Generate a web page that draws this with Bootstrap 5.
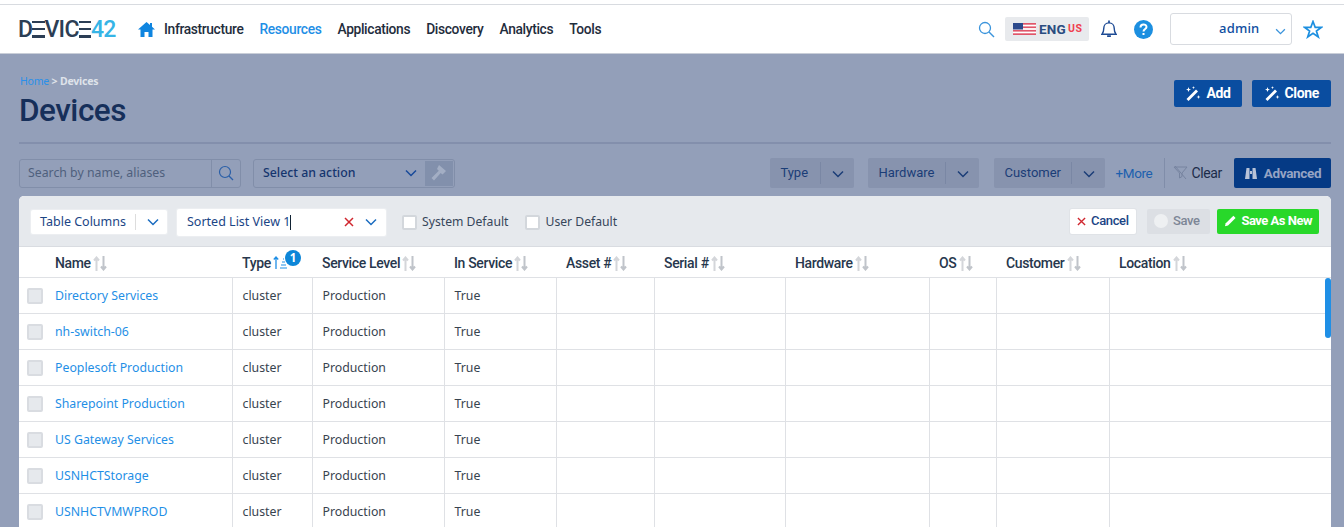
<!DOCTYPE html>
<html lang="en"><head><meta charset="utf-8"><title>Devices</title>
<link href="https://cdn.jsdelivr.net/npm/bootstrap@5.3.0/dist/css/bootstrap.min.css" rel="stylesheet">
<style>
html,body{height:527px;overflow:hidden}
body{background:#939fb9;font-family:"Noto Sans",sans-serif;font-size:12.3px;color:#1f2d3d}
.cond{font-family:Roboto,sans-serif;font-weight:500;letter-spacing:-.35px}
.strip{height:4px;background:#fff}
.topbar{height:50px;background:#fff;border-top:1px solid #d8dbe0;border-bottom:1px solid #c9ced8;padding:0 21px 0 18px}
.logo{font-family:Roboto,sans-serif;font-size:23px;font-weight:500;letter-spacing:-.75px;color:#2c3e55;width:99px;line-height:1;white-space:nowrap;flex:none}
.logo b{font-weight:500;color:#36b4e6}
.logo i{font-style:normal;color:transparent;background:linear-gradient(#2c3e55 0 2.5px,transparent 2.5px 7px,#2c3e55 7px 9.5px,transparent 9.5px 14.5px,#2c3e55 14.5px 17px);background-size:100% 17px;background-repeat:no-repeat;background-position:0 5px}
.homeic{margin:0 9px 0 21px}
.mainnav{gap:16px;font-size:13.8px}
.mainnav a{color:#1f2d3d;text-decoration:none}
.mainnav a.on{color:#1f8fe6}
.lang{width:84px;height:24px;background:#e8eaed;border-radius:2px;gap:3px;margin:0 12px 0 10px;font-size:13.5px;font-weight:700;color:#2a4d80;letter-spacing:.2px;padding-left:8px}
.lang small{font-size:10.5px;color:#f0404f;margin-left:-1px;letter-spacing:.6px}
.bellq{margin-left:17px}
.adminbox{width:122px;height:32px;border:1px solid #d8dbe0;border-radius:3px;color:#0e4da0;font-size:13px;font-weight:500;padding:0 5px 0 48px;margin:0 11px 0 17px;letter-spacing:.2px}
.page{padding:0 13px 0 19px}
.headrow{height:90px;border-bottom:2px solid #838fac}
.crumb{font-size:10.5px;font-weight:700;margin-top:20px;margin-left:1px;color:#dfe3ea;letter-spacing:-.2px}
.crumb a{color:#2a90ea;text-decoration:none;font-weight:400}
.ttl{font-size:31.500px;font-weight:500;color:#162f5a;line-height:36px;margin:3px 0 0;letter-spacing:-.5px}
.bigbtn{height:27px;background:#0a4da0;border-radius:2px;color:#fff;font-size:14px;font-weight:700;border:0;padding:0 11px;gap:5px;margin-top:26px}
.bigbtn+.bigbtn{margin-left:2px;padding:0 12px}
.filt{height:29px;margin-top:14px;padding-top:1px}
.srch{width:222px;height:29px;border:1px solid #818ea9;border-radius:3px;color:#4f5f7d;padding-left:8px}
.srch .ph{width:183px;white-space:nowrap;padding-top:1px}
.srch .sic{border-left:1px solid #818ea9;height:27px;flex:1}
.actsel{width:202px;height:29px;border:1px solid #818ea9;border-radius:3px;margin-left:12px;color:#15356e;font-weight:500;padding:1px 1px 1px 9px}
.actsel .hm{width:28px;height:25px;background:#8290ac;margin-left:auto}
.fsel{height:30px;background:#8793ae;border-radius:2px;color:#1b3d77;font-size:13px;font-weight:400;letter-spacing:0;margin-right:14px}
.fsel.wide{margin-right:15px}
.fsel.last{margin-right:14px}
.fsel .lb{height:22px;border-right:1px solid #7a87a4;line-height:22px;padding-left:10px}
.fsel .w1{width:51px}.fsel .w2{width:78px}
.fsel .ch{width:33px}
.more{color:#1c5fae;font-size:13.5px;margin:0 12px 0 -4px;font-weight:400}
.vsep{width:1px;height:30px;background:#808da9;margin-right:8px}
.clr{font-size:14px;color:#1c2c4a;font-weight:400;gap:3px;margin-right:12px}
.advbtn{height:30px;width:97px;background:#053a85;border-radius:2px;color:#95a4c4;font-size:13.5px;font-weight:700;gap:6px;justify-content:center}
.cardx{margin-top:9px;background:#fff;border-radius:5px 5px 0 0;overflow:hidden;position:relative;height:340px}
.tools{height:51px;background:#e6e9ed;border-bottom:1px solid #d9dce1;padding:2px 12px 0}
.wsel{background:#fff;border-radius:2px;color:#1b4585;font-size:12.5px;height:24px;width:136px;padding-left:9px;box-shadow:0 0 0 1px #eceef1;white-space:nowrap}
.wsel .sp{width:1px;height:16px;background:#ddd;margin:0 11px 0 auto}
.wsel2{background:#fff;border-radius:2px;color:#1b4585;height:27px;width:209px;margin:0 16px 0 10px;padding:0 9px 0 10px;font-size:12.5px;box-shadow:0 0 0 1px #eceef1;white-space:nowrap}
.wsel2 .xx{margin-right:11px}
.caret{display:inline-block;width:1px;height:15px;background:#123}
.ckb{width:15px;height:15px;background:#fff;border:2px solid #d3d7dc;border-radius:2px;margin-right:5px}
.cklab{margin-right:17px;color:#36465a;font-size:12.2px}
.tb{height:25px;border-radius:2px;font-size:13px;gap:5px;padding:0 7px;font-weight:500;white-space:nowrap;margin-top:-2px}
.tb-c{background:#fff;color:#1b4585;box-shadow:0 0 0 1px #e0e3e7;margin-right:11px;width:66px}
.tb-s{background:#dcdfe4;color:#7c8696;margin-right:7px;width:63px}
.tb-n{background:#28d82a;color:#fff;font-weight:700;width:102px;letter-spacing:-.5px}
.dot{width:14px;height:14px;border-radius:50%;background:#eef0f2;display:inline-block}
.grid{table-layout:fixed;width:1312px;border-collapse:collapse;margin:0}
.grid th{height:30px;border-bottom:1px solid #dfe1e5;font-family:Roboto,sans-serif;font-weight:500;font-size:14px;letter-spacing:-.35px;color:#27374d;padding:3px 0 0 10px;white-space:nowrap;vertical-align:middle}
.grid td{height:36px;border-bottom:1px solid #dfe1e5;border-right:1px solid #dfe1e5;padding:2px 0 0 10px;color:#38434f;font-size:12.3px;vertical-align:middle}
.grid tr>*:first-child{padding-left:36px;position:relative}
.grid td a{color:#1f8fe6;text-decoration:none}
.grid td:last-child{border-right:0}
.rowck{position:absolute;left:8px;top:10px;width:16px;height:16px;background:#e6e9ed;border:2px solid #d9dce1;border-radius:2px}
.sorti{vertical-align:-3px;margin-left:-1px}
.sortup{vertical-align:-1px;margin-left:-1px}
.cnum{position:absolute;left:266px;top:54px;width:16px;height:16px;border-radius:50%;background:#0d86d8;color:#fff;font-size:11.500px;font-weight:700;line-height:16px;text-align:center}
.sbar{position:absolute;right:0;top:82px;width:6px;height:60px;background:#1f8fe6;border-radius:3px}
.c1{width:213px}.c2{width:80px}.c3{width:132px}.c4{width:112px}.c5{width:98px}.c6{width:131px}.c7{width:144px}.c8{width:67px}.c9{width:113px}
</style></head><body>
<svg width="0" height="0" class="position-absolute">
<symbol id="chev" viewBox="0 0 12 8"><path d="M1 1.500 6 6.500 11 1.500" fill="none" stroke="currentColor" stroke-width="1.500"/></symbol>
<symbol id="xic" viewBox="0 0 10 10"><path d="M1 1l8 8M9 1l-8 8" fill="none" stroke="#d0272f" stroke-width="1.500"/></symbol>
<symbol id="sort" viewBox="0 0 14 15"><path d="M3.500 15V2M1 4.500 3.500 1.500 6 4.500" fill="none" stroke="#d4d6da" stroke-width="2"/><path d="M10.500 0V13M8 10.500 10.500 13.500 13 10.500" fill="none" stroke="#c0c4ca" stroke-width="2"/></symbol>
<symbol id="wand" viewBox="0 0 16 16"><path d="M1.500 13 11 3.500l2 2L3.500 15z" fill="#fff"/><path d="M3.500 1 4.200 3 6 3.600 4.200 4.300 3.500 6 2.800 4.300 1 3.600 2.800 3zM13.500 9l.5 1.500 1.500.5-1.500.5-.5 1.500-.5-1.500-1.500-.5 1.500-.5zM8.500 0l.4 1.200 1.200.4-1.200.4-.4 1.200L8.100 2 6.900 1.600 8.100 1.200z" fill="#fff"/></symbol>
</svg>
<div class="strip"></div>
<nav class="topbar d-flex align-items-center">
 <div class="logo">D<i>E</i>VIC<i>E</i><b>42</b></div>
 <svg class="homeic" width="17" height="15" viewBox="0 0 17 15"><path d="M8.500 0 0 7.500h2.500V15h4v-5h4v5h4V7.500H17L14 4.800V1h-2v2.100z" fill="#0f85e0"/></svg>
 <div class="mainnav cond d-flex"><a href="#">Infrastructure</a><a href="#" class="on">Resources</a><a href="#">Applications</a><a href="#">Discovery</a><a href="#">Analytics</a><a href="#">Tools</a></div>
 <svg class="ms-auto" width="17" height="17" viewBox="0 0 17 17"><circle cx="7" cy="7" r="5.500" fill="none" stroke="#3a94dc" stroke-width="1.300"/><path d="M11 11l5 5" stroke="#3a94dc" stroke-width="1.400"/></svg>
 <div class="lang d-flex align-items-center cond">
  <svg width="23" height="12" viewBox="0 0 23 12"><rect width="23" height="12" fill="#fff"/><g fill="#e0566a"><rect width="23" height="1.700"/><rect y="3.400" width="23" height="1.700"/><rect y="6.900" width="23" height="1.700"/><rect y="10.300" width="23" height="1.700"/></g><rect width="10" height="6.500" fill="#2c4a8c"/></svg>
  <span>ENG</span><small>US</small></div>
 <svg width="16" height="19" viewBox="0 0 17 19"><path d="M1 14.500c2-2 2-3.500 2-6.500 0-3 2.200-5.500 5.500-5.500S14 5 14 8c0 3 0 4.500 2 6.500z" fill="none" stroke="#1d4a94" stroke-width="1.500"/><path d="M8.500 0v2.500M6.500 16.500h4" stroke="#1d4a94" stroke-width="1.800"/></svg>
 <svg class="bellq" width="19" height="19" viewBox="0 0 19 19"><circle cx="9.500" cy="9.500" r="9.500" fill="#1c8fe0"/><path d="M6.500 7.500c0-4 6-4 6-.5 0 2-3 2-3 4.500" fill="none" stroke="#fff" stroke-width="2"/><rect x="8.500" y="13" width="2" height="2" fill="#fff"/></svg>
 <div class="adminbox d-flex align-items-center">admin<svg class="ms-auto" style="color:#3a94dc;margin-top:4px" width="11" height="7"><use href="#chev"/></svg></div>
 <svg width="20" height="19" viewBox="0 0 20 19"><path d="M10 1.500 12.200 7.300H18.500L13.400 11 15.300 17 10 13.400 4.700 17 6.600 11 1.500 7.300H7.800z" fill="none" stroke="#1c8fe0" stroke-width="1.700"/></svg>
</nav>
<div class="page">
 <div class="headrow d-flex justify-content-between">
  <div><div class="crumb"><a href="#">Home</a> &gt; Devices</div><h1 class="ttl cond">Devices</h1></div>
  <div class="d-flex gap-2">
   <button class="bigbtn cond d-flex align-items-center"><svg width="16" height="16"><use href="#wand"/></svg>Add</button>
   <button class="bigbtn cond d-flex align-items-center"><svg width="16" height="16"><use href="#wand"/></svg>Clone</button>
  </div>
 </div>
 <div class="filt d-flex align-items-center">
  <div class="srch d-flex align-items-center"><span class="ph">Search by name, aliases</span><span class="sic d-flex align-items-center justify-content-center"><svg width="16" height="16" viewBox="0 0 16 16"><circle cx="7" cy="7" r="5.500" fill="none" stroke="#2a5fa8" stroke-width="1.200"/><path d="M11 11l4 4" stroke="#2a5fa8" stroke-width="1.300"/></svg></span></div>
  <div class="actsel d-flex align-items-center">Select an action<svg class="ms-auto" style="color:#184a9a" width="12" height="8"><use href="#chev"/></svg><span class="hm d-flex align-items-center justify-content-center ms-2"><svg width="18" height="18" viewBox="0 0 18 18"><path d="M9 1l7 6-3.500 3.500-1.800-1.500L4 16.500 1.500 14 8.800 6.800 7 5z" fill="#a3aec4"/></svg></span></div>
  <div class="fsel d-flex align-items-center ms-auto cond"><span class="lb w1">Type</span><span class="ch text-center"><svg width="12" height="8"><use href="#chev"/></svg></span></div>
  <div class="fsel wide d-flex align-items-center cond"><span class="lb w2">Hardware</span><span class="ch text-center"><svg width="12" height="8"><use href="#chev"/></svg></span></div>
  <div class="fsel last d-flex align-items-center cond"><span class="lb w2">Customer</span><span class="ch text-center"><svg width="12" height="8"><use href="#chev"/></svg></span></div>
  <a class="more cond text-decoration-none" href="#">+More</a>
  <span class="vsep"></span>
  <span class="clr cond d-flex align-items-center"><svg width="15" height="14" viewBox="0 0 15 14"><path d="M1 1h13L9 7v3.500L6.500 12V7zM2 0l11 13" fill="none" stroke="#76839f" stroke-width="1"/></svg>Clear</span>
  <div class="advbtn cond d-flex align-items-center"><svg width="14" height="13" viewBox="0 0 14 13"><path d="M1 12 2.500 1h3v11zM13 12 11.500 1h-3v11zM6 4h2v3H6z" fill="#b8c3d8"/></svg>Advanced</div>
 </div>
 <div class="cardx">
  <div class="tools d-flex align-items-center">
   <div class="wsel d-flex align-items-center">Table Columns<span class="sp"></span><svg class="me-2" style="color:#1a6cc0" width="12" height="8"><use href="#chev"/></svg></div>
   <div class="wsel2 d-flex align-items-center">Sorted List View 1<span class="caret"></span><svg class="ms-auto xx" width="10" height="10"><use href="#xic"/></svg><svg style="color:#1a6cc0" width="12" height="8"><use href="#chev"/></svg></div>
   <span class="ckb"></span><span class="cklab">System Default</span>
   <span class="ckb"></span><span class="cklab">User Default</span>
   <div class="tb tb-c cond d-flex align-items-center ms-auto"><svg width="9" height="9"><use href="#xic"/></svg>Cancel</div>
   <div class="tb tb-s cond d-flex align-items-center"><span class="dot"></span>Save</div>
   <div class="tb tb-n cond d-flex align-items-center"><svg width="14" height="14" viewBox="0 0 14 14"><path d="M1 13l1-3.500L10.500 1 13 3.500 4.500 12z" fill="#fff"/></svg>Save As New</div>
  </div>
  <table class="grid">
   <colgroup><col class="c1"><col class="c2"><col class="c3"><col class="c4"><col class="c5"><col class="c6"><col class="c7"><col class="c8"><col class="c9"><col></colgroup>
   <thead><tr>
    <th>Name <svg class="sorti" width="14" height="15"><use href="#sort"/></svg></th>
    <th>Type <svg class="sortup" width="14" height="13" viewBox="0 0 14 13"><path d="M3 13V1M.8 3.500 3 1 5.200 3.500" fill="none" stroke="#1f8fe6" stroke-width="1.300"/><path d="M7 12h7M8 9h5M9 6h3M10 3h1" stroke="#1f8fe6" stroke-width="1.200"/></svg></th>
    <th>Service Level <svg class="sorti" width="14" height="15"><use href="#sort"/></svg></th>
    <th>In Service <svg class="sorti" width="14" height="15"><use href="#sort"/></svg></th>
    <th>Asset # <svg class="sorti" width="14" height="15"><use href="#sort"/></svg></th>
    <th>Serial # <svg class="sorti" width="14" height="15"><use href="#sort"/></svg></th>
    <th>Hardware <svg class="sorti" width="14" height="15"><use href="#sort"/></svg></th>
    <th>OS <svg class="sorti" width="14" height="15"><use href="#sort"/></svg></th>
    <th>Customer <svg class="sorti" width="14" height="15"><use href="#sort"/></svg></th>
    <th>Location <svg class="sorti" width="14" height="15"><use href="#sort"/></svg></th>
   </tr></thead>
   <tbody>
    <tr><td><span class="rowck"></span><a href="#">Directory Services</a></td><td>cluster</td><td>Production</td><td>True</td><td></td><td></td><td></td><td></td><td></td><td></td></tr>
    <tr><td><span class="rowck"></span><a href="#">nh-switch-06</a></td><td>cluster</td><td>Production</td><td>True</td><td></td><td></td><td></td><td></td><td></td><td></td></tr>
    <tr><td><span class="rowck"></span><a href="#">Peoplesoft Production</a></td><td>cluster</td><td>Production</td><td>True</td><td></td><td></td><td></td><td></td><td></td><td></td></tr>
    <tr><td><span class="rowck"></span><a href="#">Sharepoint Production</a></td><td>cluster</td><td>Production</td><td>True</td><td></td><td></td><td></td><td></td><td></td><td></td></tr>
    <tr><td><span class="rowck"></span><a href="#">US Gateway Services</a></td><td>cluster</td><td>Production</td><td>True</td><td></td><td></td><td></td><td></td><td></td><td></td></tr>
    <tr><td><span class="rowck"></span><a href="#">USNHCTStorage</a></td><td>cluster</td><td>Production</td><td>True</td><td></td><td></td><td></td><td></td><td></td><td></td></tr>
    <tr><td><span class="rowck"></span><a href="#">USNHCTVMWPROD</a></td><td>cluster</td><td>Production</td><td>True</td><td></td><td></td><td></td><td></td><td></td><td></td></tr>
   </tbody>
  </table>
  <span class="cnum">1</span>
  <span class="sbar"></span>
 </div>
</div>
<script src="https://cdn.jsdelivr.net/npm/bootstrap@5.3.0/dist/js/bootstrap.bundle.min.js"></script>
</body></html>
